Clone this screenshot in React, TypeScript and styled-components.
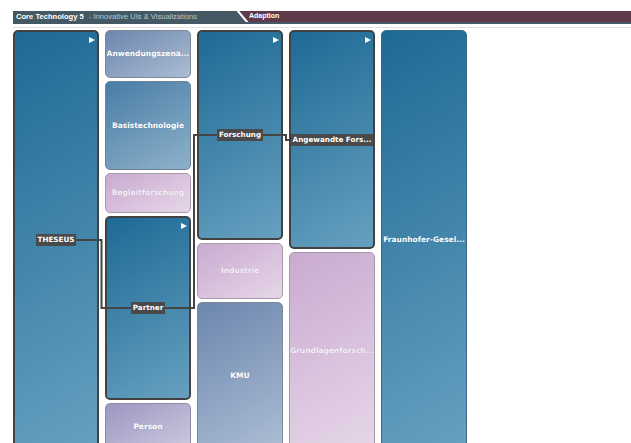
import styled, { createGlobalStyle, css } from "styled-components";

// ------ Global ------ //
const GlobalStyle = createGlobalStyle`
  html, body {
    margin: 0;
    background: #fff;
    overflow: hidden;
  }
  body {
    padding: 11px 0 0 13px;
    font-family: "DejaVu Sans", Verdana, sans-serif;
  }
`;

type Tone = "blue" | "slate" | "steel" | "pink" | "lavender";

const tones: Record<Tone, { from: string; to: string; text: string; line: string }> = {
  blue: { from: "#1d6a95", to: "#67a0bf", text: "#fff", line: "#3b6a88" },
  slate: { from: "#6c86ae", to: "#acbdd4", text: "#fff", line: "#7d8798" },
  steel: { from: "#4a7da6", to: "#8db1ca", text: "#fff", line: "#6d8194" },
  pink: { from: "#c9abd0", to: "#e6d6e8", text: "#f7f0f8", line: "#a699a8" },
  lavender: { from: "#9c97c1", to: "#cbc8de", text: "#fff", line: "#8e8ba2" },
};

// ------ Header ------ //
const Bar = styled.div`
  display: flex;
  height: 13px;
  background: #445963;
  font-family: "Liberation Sans", Arial, sans-serif;
  font-size: 7.6px;
  line-height: 12px;
  color: #fff;
`;
const Crumb = styled.div`
  width: 220px;
  flex: none;
  padding-left: 3px;
  white-space: nowrap;
  b {
    font-weight: 700;
  }
  span {
    color: #bcc6cb;
    margin-left: 5px;
  }
`;
const Tab = styled.div`
  flex: 1;
  display: flex;
  height: 11px;
  background: #5e3a4a;
  font-weight: 700;
  font-size: 7px;
  line-height: 10px;
`;
const Slash = styled.svg`
  display: block;
  flex: none;
`;
const Rule = styled.div`
  height: 1px;
  margin-top: 3px;
  background: #e1e1e1;
`;

// ------ Board ------ //
const Board = styled.div`
  position: relative;
  display: flex;
  gap: 6px;
  height: 420px;
  margin-top: 2px;
`;
const Column = styled.div`
  width: 86px;
  flex: none;
  display: flex;
  flex-direction: column;
  gap: 3px;
`;
const Tile = styled.div<{ $h?: number; $tone: Tone; $active?: boolean }>`
  position: relative;
  box-sizing: border-box;
  ${p => (p.$h ? css`height: ${p.$h}px; flex: none;` : css`flex: 1;`)}
  display: flex;
  align-items: center;
  justify-content: center;
  overflow: hidden;
  border-radius: 5px;
  background: linear-gradient(150deg, ${p => tones[p.$tone].from}, ${p => tones[p.$tone].to});
  border: 1px solid ${p => tones[p.$tone].line};
  ${p =>
    p.$active &&
    css`
      border: 2px solid #424242;
    `}
`;
const Name = styled.div<{ $tone: Tone }>`
  max-width: 100%;
  white-space: nowrap;
  overflow: hidden;
  font-size: 7.5px;
  font-weight: 700;
  line-height: 10px;
  color: ${p => tones[p.$tone].text};
  text-shadow: 0 0 1px rgba(0, 0, 0, 0.15);
`;
const Tag = styled.div`
  position: relative;
  z-index: 2;
  box-sizing: border-box;
  white-space: nowrap;
  padding: 1px 2px;
  background: #4a4a4a;
  color: #fff;
  font-size: 7.2px;
  font-weight: 700;
  line-height: 10px;
`;
const Arrow = styled.div`
  position: absolute;
  top: 5px;
  right: 2px;
  width: 0;
  height: 0;
  border-left: 6px solid #fff;
  border-top: 3.5px solid transparent;
  border-bottom: 3.5px solid transparent;
`;
const Links = styled.svg`
  position: absolute;
  left: 0;
  top: 0;
  z-index: 1;
  pointer-events: none;
  overflow: visible;
`;

interface Node {
  name: string;
  tone: Tone;
  h?: number;
  active?: boolean;
  open?: boolean;
}

const columns: Node[][] = [
  [{ name: "THESEUS", tone: "blue", active: true, open: true }],
  [
    { name: "Anwendungszena...", tone: "slate", h: 48 },
    { name: "Basistechnologie", tone: "steel", h: 89 },
    { name: "Begleitforschung", tone: "pink", h: 40 },
    { name: "Partner", tone: "blue", h: 184, active: true, open: true },
    { name: "Person", tone: "lavender" },
  ],
  [
    { name: "Forschung", tone: "blue", h: 210, active: true, open: true },
    { name: "Industrie", tone: "pink", h: 56 },
    { name: "KMU", tone: "slate" },
  ],
  [
    { name: "Angewandte Fors...", tone: "blue", h: 219, active: true, open: true },
    { name: "Grundlagenforsch...", tone: "pink" },
  ],
  [{ name: "Fraunhofer-Gesel...", tone: "blue" }],
];

export default function App() {
  return (
    <>
      <GlobalStyle />
      <Bar>
        <Crumb>
          <b>Core Technology 5</b>
          <span>- Innovative UIs &amp; Visualizations</span>
        </Crumb>
        <Tab>
          <Slash width="13" height="11" viewBox="0 0 13 11">
            <polygon points="0,0 1,0 11,11 0,11" fill="#445963" />
            <line x1="1.5" y1="-0.5" x2="11.5" y2="11.5" stroke="#fff" strokeWidth="2" />
          </Slash>
          Adaption
        </Tab>
      </Bar>
      <Rule />
      <Board>
        <Links width="480" height="420">
          <path
            d="M43 210 H88.5 V278 H135 M135 278 H181 V105 H227 M227 105 H273 V110 H319"
            fill="none"
            stroke="#444"
            strokeWidth="2"
          />
        </Links>
        {columns.map((col, i) => (
          <Column key={i}>
            {col.map(node => (
              <Tile key={node.name} $h={node.h} $tone={node.tone} $active={node.active}>
                {node.open && <Arrow />}
                {node.active ? <Tag>{node.name}</Tag> : <Name $tone={node.tone}>{node.name}</Name>}
              </Tile>
            ))}
          </Column>
        ))}
      </Board>
    </>
  );
}
